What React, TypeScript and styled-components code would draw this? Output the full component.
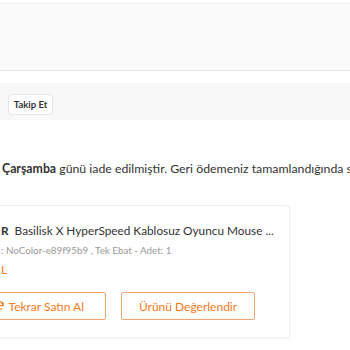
import React from 'react';
import styled, { createGlobalStyle } from 'styled-components';

const GlobalStyle = createGlobalStyle`
  html, body {
    margin: 0;
    padding: 0;
    background: #ffffff;
    overflow: hidden;
  }
  body {
    font-family: Lato, "Open Sans", sans-serif;
    color: #333333;
  }
`;

const Page = styled.div`
  width: 350px;
  height: 350px;
  overflow: hidden;
  padding-top: 3px;
  box-sizing: border-box;
`;

const SellerBand = styled.div`
  height: 66px;
  background: #fafafa;
  border-top: 1px solid #efefef;
  border-bottom: 1px solid #e4e4e4;
`;

const FollowBand = styled.div`
  margin-top: 12px;
  height: 37px;
  background: #f8f8f8;
  padding: 9px 0 0 8px;
  box-sizing: border-box;
`;

const FollowButton = styled.button`
  width: 45px;
  height: 21px;
  padding: 0;
  background: #ffffff;
  border: 1px solid #e6e6e6;
  border-radius: 4px;
  font-family: inherit;
  font-size: 9.5px;
  font-weight: 700;
  color: #333333;
`;

const Notice = styled.p`
  margin: 39px 0 0 2px;
  width: 600px;
  white-space: nowrap;
  font-size: 12.3px;
  line-height: 20px;
  color: #333333;
`;

const Strong = styled.b`
  font-weight: 700;
`;

const Card = styled.div`
  margin-top: 26px;
  margin-left: -20px;
  width: 310px;
  height: 133px;
  box-sizing: border-box;
  border: 1px solid #efefef;
  border-radius: 4px;
  box-shadow: 0 1px 3px rgba(0, 0, 0, 0.05);
  padding: 15px 0 0 20px;
  display: flex;
  flex-direction: column;
`;

const Title = styled.div`
  font-size: 11.8px;
  line-height: 20px;
  color: #333333;
  white-space: nowrap;
`;

const Brand = styled.span`
  font-weight: 700;
  margin-right: 6px;
`;

const Variant = styled.div`
  margin-top: 1px;
  font-size: 9.8px;
  line-height: 16px;
  color: #999999;
  white-space: nowrap;
`;

const Price = styled.div`
  margin-top: 2px;
  font-size: 12px;
  line-height: 20px;
  color: #f27a1a;
`;

const Actions = styled.div`
  margin-top: 12px;
  margin-left: -40px;
  display: flex;
  gap: 15px;
`;

const ActionButton = styled.button<{ $width: number; $end?: boolean }>`
  width: ${({ $width }) => $width}px;
  height: 28px;
  box-sizing: border-box;
  background: #ffffff;
  border: 1px solid #f2a470;
  border-radius: 2px;
  font-family: inherit;
  font-size: 12px;
  color: #f27a1a;
  display: flex;
  align-items: center;
  justify-content: ${({ $end }) => ($end ? 'flex-end' : 'center')};
  gap: 4px;
  padding: ${({ $end }) => ($end ? '0 21px 0 0' : '0')};
`;

const RepeatIcon = () => (
  <svg width="12" height="12" viewBox="0 0 24 24" fill="none" stroke="#f27a1a" strokeWidth="2.5">
    <path d="M20 11a8 8 0 1 0-2.3 5.7" />
    <path d="M20 4v7h-7" />
  </svg>
);

const App: React.FC = () => (
  <Page>
    <GlobalStyle />
    <SellerBand />
    <FollowBand>
      <FollowButton>Takip Et</FollowButton>
    </FollowBand>
    <Notice>
      <Strong>Çarşamba</Strong> günü iade edilmiştir. Geri ödemeniz tamamlandığında size bilgi verilecektir.
    </Notice>
    <Card>
      <Title>
        <Brand>R</Brand>Basilisk X HyperSpeed Kablosuz Oyuncu Mouse ...
      </Title>
      <Variant>: NoColor-e89f95b9 , Tek Ebat - Adet: 1</Variant>
      <Price>L</Price>
      <Actions>
        <ActionButton $width={145} $end>
          <RepeatIcon />
          Tekrar Satın Al
        </ActionButton>
        <ActionButton $width={134}>Ürünü Değerlendir</ActionButton>
      </Actions>
    </Card>
  </Page>
);

export default App;
